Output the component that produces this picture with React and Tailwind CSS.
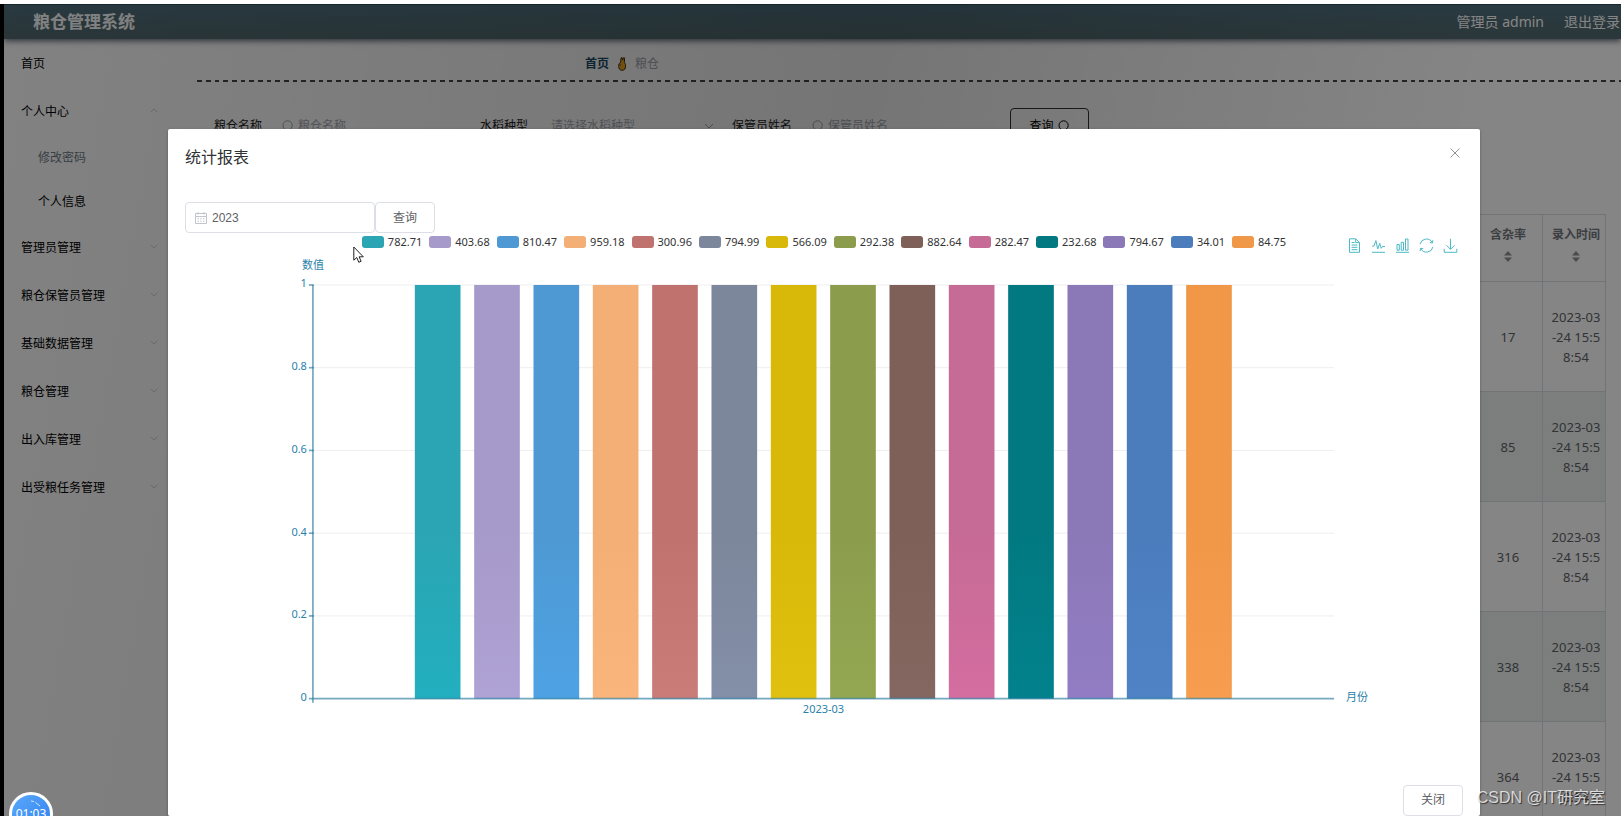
import React from "react";

const menu = [
  { label: "首页" },
  { label: "个人中心", arrow: "up" },
  { label: "修改密码", sub: true, muted: true },
  { label: "个人信息", sub: true },
  { label: "管理员管理", arrow: "down" },
  { label: "粮仓保管员管理", arrow: "down" },
  { label: "基础数据管理", arrow: "down" },
  { label: "粮仓管理", arrow: "down" },
  { label: "出入库管理", arrow: "down" },
  { label: "出受粮任务管理", arrow: "down" },
];

const series = [
  { name: "782.71", top: "#2ba5b3", bottom: "#22afbf" },
  { name: "403.68", top: "#a69aca", bottom: "#afa2d4" },
  { name: "810.47", top: "#4e99d3", bottom: "#4ea2e4" },
  { name: "959.18", top: "#f3af76", bottom: "#fab57d" },
  { name: "300.96", top: "#c0736e", bottom: "#ca7c78" },
  { name: "794.99", top: "#7c879b", bottom: "#848fa9" },
  { name: "566.09", top: "#d8b808", bottom: "#e1c110" },
  { name: "292.38", top: "#8b9d4d", bottom: "#93a752" },
  { name: "882.64", top: "#7e6058", bottom: "#846760" },
  { name: "282.47", top: "#c66b95", bottom: "#d46da0" },
  { name: "232.68", top: "#027981", bottom: "#02828d" },
  { name: "794.67", top: "#8b78b7", bottom: "#927dc4" },
  { name: "34.01", top: "#4b7dbd", bottom: "#5083c6" },
  { name: "84.75", top: "#f09748", bottom: "#f69d50" },
];

const rows = ["17", "85", "316", "338", "364"];
const ticks = ["1", "0.8", "0.6", "0.4", "0.2", "0"];

function Chevron({ up, className }) {
  return (
    <svg viewBox="0 0 10 6" className={className} fill="none" stroke="currentColor" strokeWidth="1">
      <path d={up ? "M1 5 5 1 9 5" : "M1 1 5 5 9 1"} />
    </svg>
  );
}

function SearchIcon({ className }) {
  return (
    <svg viewBox="0 0 12 12" className={className} fill="none" stroke="currentColor" strokeWidth="1">
      <circle cx="5.6" cy="5.4" r="4.6" />
      <path d="M8.8 8.8 11 11.4" />
    </svg>
  );
}

function SortIcon() {
  return (
    <svg viewBox="0 0 8 11" className="mx-auto h-[11px] w-2" fill="#8e9096">
      <path d="M0 4.5 4 0l4 4.5zM0 6.5h8L4 11z" />
    </svg>
  );
}

function FingersIcon() {
  return (
    <svg viewBox="0 0 10 14" className="h-[14px] w-[10px]">
      <path
        d="M3.6 5.500 4 1.200c.1-.8 1.300-.8 1.400 0L5.600 3 6.200 1.100c.3-.8 1.500-.6 1.400.3L7.300 5.500c.9.6 1.300 1.600 1.300 3.200 0 2.800-1 4.600-3.400 4.600S1.700 11.600 1.700 9.400C1.700 7.400 2.200 6.200 3.600 5.500z"
        fill="#f0a91c"
        stroke="#3a2c10"
        strokeWidth="1"
      />
      <path d="M3.600 7.300v1.700" stroke="#5a4212" strokeWidth=".7" />
    </svg>
  );
}

function CalendarIcon() {
  return (
    <svg viewBox="0 0 12 12" className="h-3 w-3" fill="none" stroke="#c0c4cc" strokeWidth="1">
      <path d="M.5 1.500h11v10H.5zM.5 4.500h11M3 0v2.500M9 0v2.500" />
      <path d="M2.500 6.700h1.500M5.200 6.700h1.500M8 6.700h1.500M2.500 9.200h1.500M5.200 9.200h1.500M8 9.200h1.500" />
    </svg>
  );
}

const tools = [
  { label: "数据视图", d: "M2.500.8h6.200L12.500 4.600v9.700h-10zM8.700.8v3.800h3.800M4.600 4.500h3M4.600 7h5.800M4.600 9.300h5.800M4.600 11.700h5.800" },
  { label: "切换为折线图", d: "M1 14.300h13M1.200 8.200h1.700l2-5.600L6.700 11 8.700 5.300l1.500 5 1.300-1.800H14" },
  { label: "切换为柱状图", d: "M1 14.300h13M2 6.500h2.300v5.700H2zM6.200 4.300h2.300v7.900H6.200zM10.500 1h2.500v11.200h-2.500z" },
  { label: "还原", d: "M1 6.200A6.600 6.600 0 0 1 13.300 4.600M14 8.800A6.600 6.600 0 0 1 1.700 10.600M13.900 2.200 13.400 5l-2.600-.5M1.100 13 1.600 10.300l2.600.4" },
  { label: "保存为图片", d: "M7.500.8v10.500M3.500 7.300l4 4 4-4M1.200 10.800v3.500h12.600v-3.500" },
];

function Chart() {
  return (
    <svg
      viewBox="0 0 1279 531"
      className="block w-full font-[Noto_Sans,Noto_Sans_CJK_SC,sans-serif] text-[11px]"
      role="img"
      aria-label="统计报表"
    >
      <defs>
        {series.map((s) => (
          <linearGradient key={s.name} id={"g" + s.name} x1="0" y1="0" x2="0" y2="1">
            <stop offset="0" stopColor={s.top} />
            <stop offset=".6" stopColor={s.top} />
            <stop offset="1" stopColor={s.bottom} />
          </linearGradient>
        ))}
      </defs>
      {ticks.slice(0, 5).map((t, i) => (
        <path key={t} d={`M129 ${31 + i * 82.8}H1150`} stroke="#eeeeee" />
      ))}
      {series.map((s, i) => (
        <rect key={s.name} x={230 + i * 59.38} y="31" width="45.7" height="414" fill={`url(#g${s.name})`} />
      ))}
      <g stroke="#1f7599" strokeOpacity=".62" strokeWidth="1.7">
        <path d="M128 31V449" />
        <path d="M124 445H1150" />
        {ticks.slice(0, 5).map((t, i) => (
          <path key={t} d={`M124 ${31 + i * 82.8}h5`} />
        ))}
      </g>
      <g fill="#2a82ab">
        {ticks.map((t, i) => (
          <text key={t} x="122" y={33.5 + i * 82.8} textAnchor="end">
            {t}
          </text>
        ))}
        <text x="128" y="15" textAnchor="middle">数值</text>
        <text x="639" y="459" textAnchor="middle">2023-03</text>
        <text x="1162" y="447">月份</text>
      </g>
    </svg>
  );
}

export default function App() {
  return (
    <div className="relative flex h-screen flex-col overflow-hidden bg-white font-[Noto_Sans,Noto_Sans_CJK_SC,sans-serif] text-xs text-black">
      <div className="h-1 shrink-0 bg-white" />
      <div className="relative min-h-0 flex-1 overflow-hidden border-l-4 border-black">
        <header className="relative flex h-[35px] items-center justify-between border-t border-[#2e4a54] bg-linear-to-b from-[#4e707e] to-[#52696d] pr-px pl-[29px] whitespace-nowrap text-white shadow-[0_2px_6px_rgba(20,35,60,0.7)]">
          <h1 className="text-[17px] leading-6 font-bold">粮仓管理系统</h1>
          <div className="flex gap-5 text-sm leading-5">
            <span>管理员 admin</span>
            <a href="#logout">退出登录</a>
          </div>
        </header>

        <div className="flex">
          <nav className="w-[193px] shrink-0 pt-px">
            <ul>
              {menu.map((m) => (
                <li key={m.label}>
                  <a
                    href={"#" + m.label}
                    className={
                      m.sub
                        ? "flex h-11 items-center pl-[34px] " + (m.muted ? "text-[#6d7d84]" : "")
                        : "flex h-12 items-center justify-between pr-[39px] pl-[17px]"
                    }
                  >
                    {m.label}
                    {m.arrow && <Chevron up={m.arrow === "up"} className="mb-[3px] h-[5px] w-2 text-[#c0c3ca]" />}
                  </a>
                </li>
              ))}
            </ul>
          </nav>

          <main className="min-w-0 flex-1">
            <div className="flex h-[41px] items-center gap-2 pt-[9px] pl-[388px]">
              <a href="#home" className="font-bold text-[#1b4b66]">首页</a>
              <FingersIcon />
              <span className="text-[#a3a6ad]">粮仓</span>
            </div>
            <div className="h-[2px] bg-[repeating-linear-gradient(90deg,#444_0_5px,transparent_5px_9px,#444_9px_14px,transparent_14px_18px,#444_18px_22px,transparent_22px_26px)]" />

            <form className="mt-[26px] grid h-9 grid-cols-[266px_252px_278px_79px] items-center pl-[17px] text-[#222]">
              <div className="flex items-center">
                <label htmlFor="barn">粮仓名称</label>
                <SearchIcon className="mr-1 ml-5 h-3 w-3 text-[#a0a3aa]" />
                <input id="barn" placeholder="粮仓名称" className="w-36 bg-transparent placeholder:text-[#a8abb2]" />
              </div>
              <div className="flex items-center">
                <label htmlFor="rice">水稻种型</label>
                <select id="rice" className="ml-[23px] w-[153px] appearance-none bg-transparent text-[#a8abb2]">
                  <option>请选择水稻种型</option>
                </select>
                <Chevron className="h-[6px] w-[10px] text-[#a0a3aa]" />
              </div>
              <div className="flex items-center">
                <label htmlFor="keeper">保管员姓名</label>
                <SearchIcon className="mr-1 ml-5 h-3 w-3 text-[#a0a3aa]" />
                <input id="keeper" placeholder="保管员姓名" className="w-36 bg-transparent placeholder:text-[#a8abb2]" />
              </div>
              <button type="button" className="flex h-9 items-center justify-center gap-1 rounded border border-[#303133] text-black">
                查询
                <SearchIcon className="h-3 w-3" />
              </button>
            </form>

            <table className="mt-[70px] mr-[15px] ml-auto w-[133px] table-fixed border-collapse text-center text-[13px] leading-5 text-[#606266]">
              <thead>
                <tr className="h-[67px] text-xs">
                  <th className="w-[69px] border border-[#d8dfe2] pb-2 font-bold text-[#73767c]">
                    <div className="mb-2">含杂率</div>
                    <SortIcon />
                  </th>
                  <th className="border border-[#d8dfe2] pb-2 pl-1 font-bold text-[#73767c]">
                    <div className="mb-2">录入时间</div>
                    <SortIcon />
                  </th>
                </tr>
              </thead>
              <tbody>
                {rows.map((r) => (
                  <tr key={r} className="h-[110px] even:bg-[#ecf2f0]">
                    <td className="border border-[#d8dfe2]">{r}</td>
                    <td className="border border-[#d8dfe2] pl-1">
                      2023-03
                      <br />
                      -24 15:5
                      <br />
                      8:54
                    </td>
                  </tr>
                ))}
              </tbody>
            </table>
          </main>
        </div>

        <div className="absolute inset-0 overflow-hidden bg-[linear-gradient(100deg,rgba(0,0,0,0.49),rgba(0,0,0,0.54)_50%,rgba(0,0,0,0.48)_85%)] pt-[125px] pr-[141px] pl-[164px]">
          <section role="dialog" aria-labelledby="report-title" className="min-h-full rounded-xs bg-white px-[17px] pt-4 text-[#606266] shadow-[0_1px_3px_rgba(0,0,0,0.3)]">
            <div className="flex items-start justify-between">
              <h2 id="report-title" className="text-base leading-6 text-[#303133]">统计报表</h2>
              <button type="button" aria-label="Close" className="p-[3px]">
                <svg viewBox="0 0 10 10" className="h-[10px] w-[10px]" stroke="#909399" strokeWidth="1">
                  <path d="m.5.500 9 9M9.500.500l-9 9" />
                </svg>
              </button>
            </div>

            <div className="mt-[33px] flex">
              <label className="flex h-[31px] w-[190px] items-center gap-[5px] rounded border border-[#dcdfe6] pl-[9px]">
                <CalendarIcon />
                <input aria-label="年份" defaultValue="2023" className="w-36 font-[Liberation_Sans,sans-serif] outline-none" />
              </label>
              <button type="button" className="h-[31px] w-[60px] rounded border border-[#dcdfe6]">查询</button>
            </div>

            <div className="grid h-[21px] grid-cols-[1fr_auto_1fr]">
              <div />
              <ul className="flex gap-[7px] pt-px text-[11px] leading-4 text-[#333]">
                {series.map((s) => (
                  <li key={s.name}>
                    <button type="button" className="flex items-center gap-1">
                      <span className="h-3 w-[22px] rounded-[3px]" style={{ background: s.top }} />
                      {s.name}
                    </button>
                  </li>
                ))}
              </ul>
              <div className="flex items-start justify-end gap-[9px] pt-[5px] pr-[5px]">
                {tools.map((t) => (
                  <button type="button" key={t.label} aria-label={t.label}>
                    <svg viewBox="0 0 15 15" className="block h-[15px] w-[15px]" fill="none" stroke="#4cb9c4" strokeWidth="1">
                      <path d={t.d} />
                    </svg>
                  </button>
                ))}
              </div>
            </div>

            <Chart />

            <div className="flex justify-end">
              <button type="button" className="h-[31px] w-[60px] rounded border border-[#dcdfe6]">关闭</button>
            </div>
          </section>
        </div>
      </div>

      <svg viewBox="0 0 12 18" className="absolute top-[246px] left-[353px] h-[18px] w-3" fill="#fff" stroke="#222" strokeWidth="1">
        <path d="M.8 1v13.200l3-2.700 2 4.800 2.300-1-2-4.500h4.200z" />
      </svg>

      <div className="absolute -bottom-[20px] left-[9px] flex h-11 w-11 items-center justify-center rounded-full border-[3px] border-white bg-linear-to-br from-[#5aa9fb] to-[#2f7fee] text-[12px] leading-4 text-white">
        01:03
        <svg viewBox="0 0 12 8" className="absolute top-1 right-2 h-2 w-3" fill="none" stroke="#cfe6ff" strokeWidth="1">
          <path d="M1 2 4 2.600M5.500 3.500 10 7" />
        </svg>
      </div>

      <div className="absolute right-4 bottom-[6px] font-[Liberation_Sans,Noto_Sans_CJK_SC,sans-serif] text-base leading-6 whitespace-nowrap text-white/75 [text-shadow:1px_1px_1px_rgba(0,0,0,0.6)]">
        CSDN @IT研究室
      </div>
    </div>
  );
}
